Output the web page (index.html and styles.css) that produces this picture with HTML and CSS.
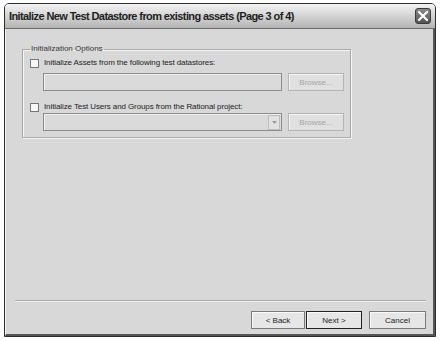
FILE: index.html
```html
<!DOCTYPE html>
<html lang="en">
<head>
  <meta charset="UTF-8">
  <title>Initalize New Test Datastore</title>
  <link rel="stylesheet" href="styles.css">
</head>
<body>

  <div class="window">
    <div class="titlebar">
      <span class="title">Initalize New Test Datastore from existing assets (Page 3 of 4)</span>
      <button class="close" type="button">
        <svg width="10" height="10" viewBox="0 0 10 10">
          <path d="M1 1 L9 9 M9 1 L1 9" stroke="#fff" stroke-width="2" stroke-linecap="square"/>
        </svg>
      </button>
    </div>

    <div class="client">
      <fieldset class="group">
        <legend>Initialization Options</legend>

        <label class="check-row"><span class="checkbox"></span>Initialize Assets from the following test datastores:</label>
        <div class="field-row">
          <div class="textbox"></div>
          <button class="browse" type="button" disabled>Browse...</button>
        </div>

        <label class="check-row second"><span class="checkbox"></span>Initialize Test Users and Groups from the Rational project:</label>
        <div class="field-row tight">
          <div class="textbox combo">
            <span class="drop">
              <svg width="5" height="3" viewBox="0 0 5 3"><path d="M0 0 H5 L2.5 3 Z" fill="#9a9a9a"/></svg>
            </span>
          </div>
          <button class="browse" type="button" disabled>Browse...</button>
        </div>
      </fieldset>

      <div class="footer">
        <div class="separator"></div>
        <div class="buttons">
          <button class="btn" type="button">&lt; Back</button>
          <button class="btn default" type="button">Next &gt;</button>
          <button class="btn cancel" type="button">Cancel</button>
        </div>
      </div>
    </div>
  </div>

</body>
</html>
```

FILE: styles.css
```css
body {
  margin: 0;
  padding: 0;
  background-color: #fff;
  font-family: "Liberation Sans", Arial, sans-serif;
}

.window {
  margin: 3px 0 0 4px;
  width: 430px;
  height: 332px;
  border: 1px solid #2e2e2e;
  border-radius: 5px 5px 0 0;
  display: flex;
  flex-direction: column;
  background-color: #d8d8d8;
}

.titlebar {
  height: 24px;
  display: flex;
  align-items: center;
  justify-content: space-between;
  padding: 0 4px 0 4px;
  border-radius: 4px 4px 0 0;
  border-bottom: 1px solid #6a6a6a;
  background: linear-gradient(to bottom, #f4f4f4 0%, #d6d6d6 45%, #b4b4b4 100%);
}

.title {
  font-weight: bold;
  font-size: 11px;
  color: #1e1e1e;
  letter-spacing: -0.6px;
}

.close {
  width: 16px;
  height: 16px;
  padding: 0;
  border: 1px solid #3a3a3a;
  border-radius: 3px;
  background: linear-gradient(to bottom, #8a8a8a, #555);
  display: flex;
  align-items: center;
  justify-content: center;
}

.client {
  flex: 1;
  display: flex;
  flex-direction: column;
  border-left: 1px solid #f2f2f2;
  border-right: 2px solid #555;
  border-bottom: 2px solid #555;
}

.group {
  margin: 15px 0 0 16px;
  width: 312px;
  padding: 4px 6px 6px 7px;
  border: 1px solid #a9a9a9;
  box-shadow: inset 1px 1px 0 #f4f4f4, 1px 1px 0 #f4f4f4;
  font-size: 8px;
  color: #222;
}

.group legend {
  padding: 0 1px;
  margin-left: 0;
  font-size: 8px;
  line-height: 10px;
  color: #333;
}

.check-row {
  display: flex;
  align-items: center;
  gap: 5px;
  height: 10px;
  line-height: 10px;
  letter-spacing: -0.1px;
}

.check-row.second {
  margin-top: 11px;
}

.checkbox {
  width: 7px;
  height: 7px;
  border: 1px solid #777;
  background-color: #f7f7f7;
}

.field-row {
  display: flex;
  gap: 6px;
  margin-top: 5px;
  padding-left: 13px;
}

.field-row.tight {
  margin-top: 1px;
}

.textbox {
  width: 237px;
  height: 16px;
  border: 1px solid #8c8c8c;
  background-color: #dadada;
  box-shadow: inset 1px 1px 0 #f0f0f0;
  display: flex;
  justify-content: flex-end;
  align-items: center;
}

.combo .drop {
  width: 10px;
  height: 13px;
  margin-right: 1px;
  border: 1px solid #bdbdbd;
  background-color: #e2e2e2;
  display: flex;
  align-items: center;
  justify-content: center;
}

.browse {
  width: 56px;
  height: 18px;
  padding: 0;
  border: 1px solid #b4b4b4;
  background-color: #e0e0e0;
  box-shadow: inset 1px 1px 0 #f4f4f4;
  font-family: "Liberation Sans", Arial, sans-serif;
  font-size: 8px;
  color: #a4a4a4;
}

.footer {
  margin-top: auto;
  padding: 0 7px 5px 9px;
}

.separator {
  height: 1px;
  background-color: #a8a8a8;
  border-bottom: 1px solid #f2f2f2;
}

.buttons {
  display: flex;
  justify-content: flex-end;
  margin-top: 9px;
}

.btn {
  width: 54px;
  height: 18px;
  padding: 0;
  border: 1px solid #7a7a7a;
  background-color: #e6e6e6;
  box-shadow: inset 1px 1px 0 #fafafa;
  font-family: "Liberation Sans", Arial, sans-serif;
  font-size: 8px;
  color: #222;
}

.btn.default {
  width: 56px;
  border: 1px solid #222;
  margin-left: 1px;
}

.btn.cancel {
  width: 57px;
  margin-left: 7px;
}
```
